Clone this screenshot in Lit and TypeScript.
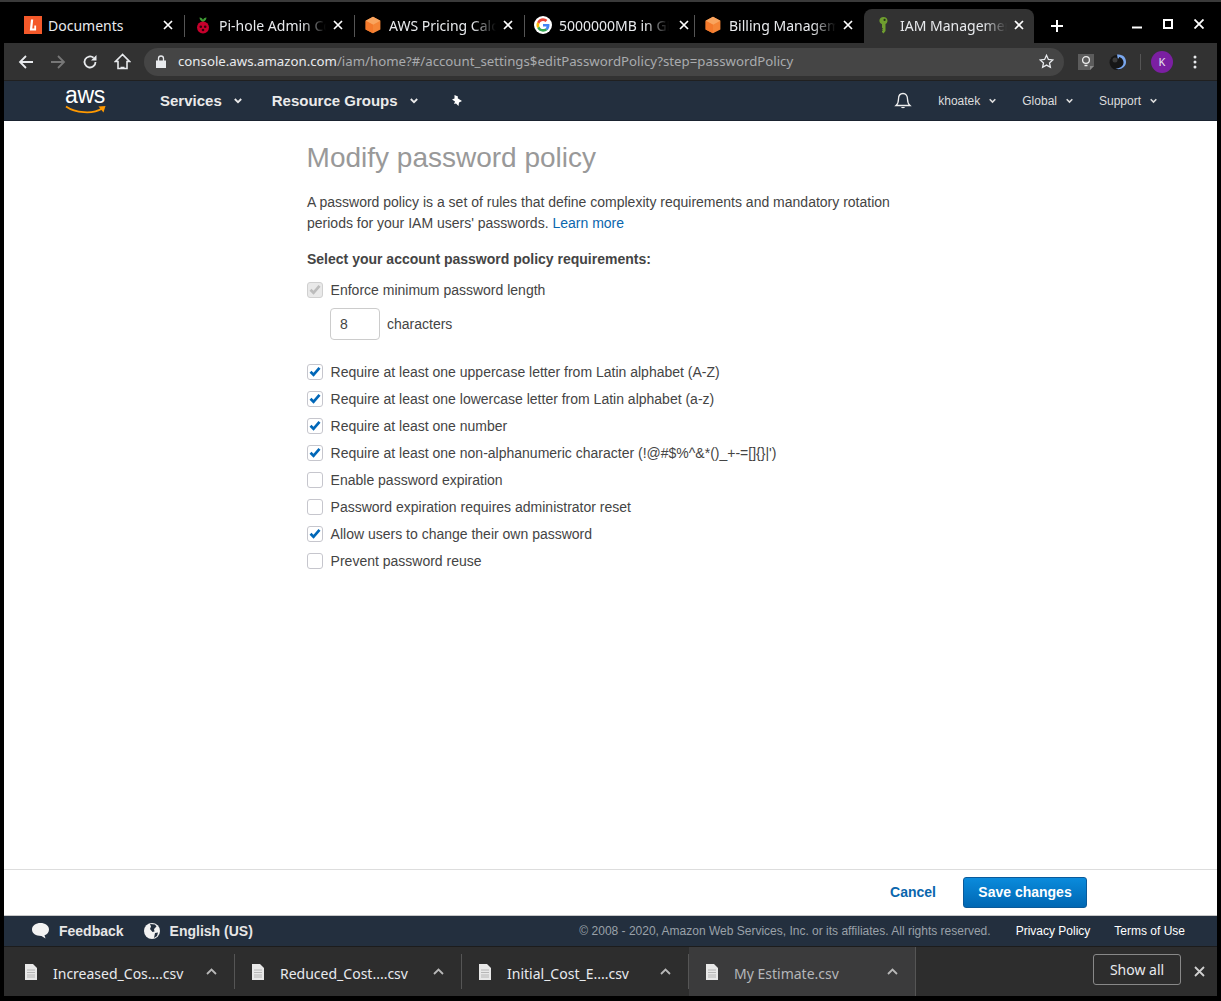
import { LitElement, html, css, svg } from "lit";
import { customElement } from "lit/decorators.js";

const cube = svg`<svg width="18" height="18" viewBox="0 0 18 18"><path d="M9 .8l7.400 4v8.600L9 17.300 1.600 13.400V4.800z" fill="#f58536"/><path d="M9 .8l7.400 4L9 8.800 1.600 4.800z" fill="#f9a45e"/><path d="M9 8.800v8.500L1.600 13.400V4.800z" fill="#f4792b"/></svg>`;
const tabs = [
  { title: "Documents", icon: svg`<svg width="18" height="18" viewBox="0 0 18 18"><rect width="18" height="18" fill="#f4592a"/><path d="M7 3.500h2.200L8.300 12.600h2v-3h1.800v4.800H5.800z" fill="#fff"/></svg>` },
  { title: "Pi-hole Admin Console", icon: svg`<svg width="18" height="18" viewBox="0 0 18 18"><path d="M9 6C7 5 5.600 3.500 5.500 1.500 7.500 1.500 8.500 2.500 9 4c.5-1.500 1.500-2.500 3.500-2.500C12.400 3.500 11 5 9 6z" fill="#3f9c35"/><circle cx="9" cy="11.500" r="6" fill="#c7002c"/><circle cx="6.800" cy="10.800" r="1.300" fill="#33000b"/><circle cx="11.200" cy="10.800" r="1.300" fill="#33000b"/><circle cx="9" cy="14" r="1.300" fill="#33000b"/></svg>` },
  { title: "AWS Pricing Calculator", icon: cube },
  { title: "5000000MB in GB", icon: svg`<svg width="18" height="18" viewBox="0 0 18 18"><circle cx="9" cy="9" r="9" fill="#fff"/><path d="M15.500 9.300c0-.5 0-1-.1-1.400H9v2.600h3.600c-.2.900-.7 1.600-1.400 2.100l2.200 1.700c1.300-1.200 2.100-3 2.100-5z" fill="#4285f4"/><path d="M9 15.700c1.800 0 3.300-.6 4.400-1.600l-2.200-1.700c-.6.400-1.300.7-2.200.7-1.700 0-3.100-1.100-3.600-2.700l-2.200 1.700c1.100 2.200 3.300 3.600 5.800 3.600z" fill="#34a853"/><path d="M5.400 10.400c-.3-.9-.3-1.800 0-2.700L3.200 6c-1 1.900-1 4.100 0 6.100z" fill="#fbbc05"/><path d="M9 5c1 0 1.800.3 2.500 1l1.900-1.900C12.200 3 10.700 2.300 9 2.300 6.500 2.300 4.300 3.700 3.200 6l2.200 1.700C5.900 6.100 7.300 5 9 5z" fill="#ea4335"/></svg>` },
  { title: "Billing Management Console", icon: cube },
];
const chev = svg`<svg class="chev" width="8" height="6" viewBox="0 0 8 6"><path d="M.8 1l3.200 3.200L7.200 1" fill="none" stroke="currentColor" stroke-width="1.800"/></svg>`;
const x = svg`<svg width="10" height="10" viewBox="0 0 10 10"><path d="M1 1l8 8M9 1l-8 8" stroke="#fff" stroke-width="1.700"/></svg>`;
const doc = svg`<svg width="12" height="16" viewBox="0 0 12 16"><path d="M0 0h8l4 4v12H0z" fill="#e8e8e8"/><path d="M2 6h8M2 8.500h8M2 11h8M2 13h8" stroke="#a8a8a8" stroke-width=".8"/></svg>`;
const tick = svg`<svg width="12" height="11" viewBox="0 0 12 11"><path d="M1.500 5.800l3 3L10.500 1.800" fill="none" stroke="currentColor" stroke-width="2.700"/></svg>`;

const opts: [string, boolean][] = [
  ["Require at least one uppercase letter from Latin alphabet (A-Z)", true],
  ["Require at least one lowercase letter from Latin alphabet (a-z)", true],
  ["Require at least one number", true],
  ["Require at least one non-alphanumeric character (!@#$%^&*()_+-=[]{}|')", true],
  ["Enable password expiration", false],
  ["Password expiration requires administrator reset", false],
  ["Allow users to change their own password", true],
  ["Prevent password reuse", false],
];
const downloads = [
  { name: "Increased_Cos....csv", w: 231 },
  { name: "Reduced_Cost....csv", w: 227 },
  { name: "Initial_Cost_E....csv", w: 227 },
  { name: "My Estimate.csv", w: 227, hover: true },
];

@customElement("app-root")
export class AppRoot extends LitElement {
  static styles = css`
    :host { display: flex; flex-direction: column; width: 1221px; height: 1001px; background: #000; box-sizing: border-box; border-top: 2px solid #3a3a3a; font-family: "Liberation Sans", Arial, sans-serif; overflow: hidden; }
    .ui { font-family: "Noto Sans", Roboto, sans-serif; }
    .strip { height: 41px; display: flex; align-items: flex-end; padding-left: 14px; color: #e8eaed; flex: none; }
    .tab { width: 170px; height: 34px; box-sizing: border-box; display: flex; align-items: center; padding: 0 0 2px 10px; font-size: 14px; position: relative; }
    .tab + .tab::before { content: ""; position: absolute; left: 0; top: 6px; height: 22px; width: 1px; background: #555; }
    .tab svg:first-child { flex: none; }
    .title { flex: 1; min-width: 0; margin-left: 7px; white-space: nowrap; overflow: hidden; -webkit-mask-image: linear-gradient(to left, transparent, #000 24px); mask-image: linear-gradient(to left, transparent, #000 24px); }
    .title.full { margin-left: 6px; -webkit-mask-image: none; mask-image: none; }
    .title.short { flex: none; width: 110px; margin-right: 3px; }
    .close { flex: none; width: 10px; height: 10px; display: flex; margin: 0 11px 0 7px; }
    .tab.active { background: #323232; border-radius: 8px 8px 0 0; }
    .tab.active::before { display: none; }
    .tab.active .title { margin-left: 8px; }
    .tab.active .close { margin-right: 10px; }
    .plus { margin-left: 17px; margin-bottom: 11px; display: flex; }
    .winctl { margin-left: auto; display: flex; align-items: center; gap: 21px; margin-bottom: 14px; padding-right: 17px; }
    .toolbar { height: 38px; flex: none; background: #323232; display: flex; align-items: center; margin: 0 4px; padding: 0 0 0 6px; color: #fff; box-sizing: border-box; border-bottom: 1px solid #202020; }
    .nav-ic { display: flex; align-items: center; justify-content: center; flex: none; width: 32px; }
    .omni { width: 920px; height: 28px; margin-left: 6px; background: #454545; border-radius: 14px; display: flex; align-items: center; font-size: 13.240px; color: #a9abae; flex: none; padding-left: 12px; box-sizing: border-box; }
    .omni b { font-weight: 400; color: #e8eaed; }
    .omni .url { padding-bottom: 1px; }
    .omni .lock { margin-right: 12px; display: flex; }
    .omni .star { margin-left: auto; margin-right: 10px; display: flex; }
    .tools { flex: 1; display: flex; align-items: center; padding-left: 14px; }
    .vsep { width: 1px; height: 16px; background: #555; }
    .avatar { width: 22px; height: 22px; border-radius: 50%; background: #7b1fa2; color: #e8eaed; font-size: 11px; display: flex; align-items: center; justify-content: center; }
    .win { flex: 1; min-height: 0; display: flex; flex-direction: column; margin: 0 4px 5px; background: #fff; }
    .awsnav { height: 40px; flex: none; background: #232f3e; color: #eee; display: flex; align-items: center; border-bottom: 1px solid #1a2330; box-sizing: border-box; }
    .logo { margin-left: 61px; width: 42px; flex: none; position: relative; height: 34px; }
    .logo span { position: absolute; left: 0; top: -1px; font-size: 23px; line-height: 24px; color: #fff; letter-spacing: -.3px; }
    .logo svg { position: absolute; left: 0; top: 21px; }
    .mainitem { font-weight: 700; font-size: 15px; display: flex; align-items: center; color: #eaeaea; }
    .mainitem .chev { margin-left: 12px; }
    .small { font-size: 12px; display: flex; align-items: center; color: #ddd; }
    .small .chev { margin-left: 9px; width: 7px; }
    main { flex: 1; min-height: 0; padding: 21px 0 0 303px; color: #444; font-size: 14px; }
    h1 { margin: 0 0 0 -.4px; font-size: 28px; line-height: 32px; font-weight: 400; color: #999; }
    p { margin: 18px 0 0; width: 600px; line-height: 21px; }
    a { color: #0a66ad; text-decoration: none; }
    .lead { margin-top: 16px; font-weight: 700; line-height: 18px; }
    .row { height: 27px; display: flex; align-items: center; gap: 7.600px; }
    .first { margin-top: 8px; }
    .cb { width: 14px; height: 14px; border: 1px solid #c6c6cd; border-radius: 3px; flex: none; background: #fff; display: flex; align-items: center; justify-content: center; color: #0067b8; }
    .cb.dis { background: #e9e9e9; color: #bcbcbc; border-color: #d0d0d0; }
    .len { display: flex; align-items: center; gap: 7px; margin: 5px 0 18px 23px; }
    .input { width: 48px; height: 30px; border: 1px solid #ccc; border-radius: 4px; box-sizing: content-box; padding: 0; display: flex; align-items: center; }
    .input span { margin-left: 9px; }
    .actions { height: 46px; flex: none; border-top: 1px solid #ddd; display: flex; align-items: center; justify-content: flex-end; padding: 0 130px 1px 0; gap: 27px; box-sizing: border-box; font-weight: 700; }
    .actions a { font-size: 14px; }
    .save { width: 124px; height: 31px; border: 1px solid #0a5a9a; border-radius: 3px; box-sizing: border-box; background: linear-gradient(#0a8bdc, #0067b3); color: #fff; display: flex; align-items: center; justify-content: center; font-size: 14px; }
    .foot { height: 31px; flex: none; background: #232f3e; color: #fff; display: flex; align-items: center; font-size: 12px; border-top: 1px solid #c8c8c8; box-sizing: border-box; padding-right: 32px; }
    .foot .fb { font-weight: 700; font-size: 14px; color: #e6e6e6; display: flex; align-items: center; gap: 9px; }
    .copy { margin-left: auto; color: #9aa1a9; }
    .links { margin-left: 25px; }
    .shelf { height: 50px; flex: none; background: #2d2d2d; display: flex; align-items: stretch; color: #e8eaed; border-top: 1px solid #1c1c1c; box-sizing: border-box; }
    .dl { box-sizing: border-box; display: flex; align-items: center; border-right: 1px solid #555; padding-left: 17px; font-size: 14px; margin: 7px 0; }
    .dl:first-child { padding-left: 21px; }
    .dl.hover { margin: 0; background: #3b3b3c; color: #b4b6b9; }
    .dl svg { flex: none; }
    .dl .name { margin-left: 16px; flex: 1; padding-top: 4px; }
    .dl .car { margin-right: 17px; display: flex; }
    .show { margin: 7px 0 0 auto; height: 31px; width: 88px; border: 1px solid #888; border-radius: 3px; box-sizing: border-box; display: flex; align-items: center; justify-content: center; font-size: 14px; }
    .shelfx { margin: 0 12px 0 13px; display: flex; align-items: center; }
  `;

  render() {
    return html`
      <div class="strip ui">
        ${tabs.map((t) => html`<div class="tab">${t.icon}<span class="title ${t.title === "Documents" ? "full" : ""} ${t.title.startsWith("5000") ? "short" : ""}">${t.title}</span><span class="close">${x}</span></div>`)}
        <div class="tab active"><svg width="18" height="18" viewBox="0 0 18 18"><path d="M9.500 1c2.400 0 4 1.600 4 3.800 0 1.500-.8 2.700-2 3.300V15l-2 2.500L8 16v-1l1-.8-1-.8 1-.9-1-.8V8.200C6.300 7.500 5.400 6.300 5.400 4.800 5.400 2.600 7.100 1 9.500 1z" fill="#6f9e2f"/><circle cx="10.600" cy="3.900" r="1.100" fill="#24331a"/></svg>
          <span class="title">IAM Management Console</span><span class="close">${x}</span></div>
        <span class="plus"><svg width="12" height="12" viewBox="0 0 12 12"><path d="M6 0v12M0 6h12" stroke="#fff" stroke-width="2"/></svg></span>
        <div class="winctl">
          <svg width="10" height="10" viewBox="0 0 10 10"><path d="M0 8.500h10" stroke="#fff" stroke-width="2"/></svg>
          <svg width="10" height="10" viewBox="0 0 10 10"><rect x="1" y="1" width="8" height="8" fill="none" stroke="#fff" stroke-width="2"/></svg>
          <svg width="10" height="10" viewBox="0 0 10 10"><path d="M.5.500l9 9M9.500.500l-9 9" stroke="#fff" stroke-width="1.800"/></svg>
        </div>
      </div>

      <div class="toolbar ui">
        <span class="nav-ic"><svg width="16" height="16" viewBox="0 0 16 16"><path d="M15 8H2M8 2L2 8l6 6" fill="none" stroke="#e8eaed" stroke-width="1.800"/></svg></span>
        <span class="nav-ic"><svg width="16" height="16" viewBox="0 0 16 16"><path d="M1 8h13M8 2l6 6-6 6" fill="none" stroke="#777" stroke-width="1.800"/></svg></span>
        <span class="nav-ic"><svg width="16" height="16" viewBox="0 0 16 16"><path d="M13.500 8A5.500 5.500 0 1 1 11.600 3.800" fill="none" stroke="#e8eaed" stroke-width="1.800"/><path d="M14.500 1v5.500H9z" fill="#e8eaed"/></svg></span>
        <span class="nav-ic"><svg width="17" height="17" viewBox="0 0 17 17"><path d="M8.500 1.500L1.500 8.500h2.500v7h9v-7h2.500z M6.500 14.500h4" fill="none" stroke="#e8eaed" stroke-width="1.600"/></svg></span>
        <div class="omni">
          <span class="lock"><svg width="10" height="13" viewBox="0 0 10 13"><path d="M0 5.500h10V13H0z" fill="#e8eaed"/><path d="M2.500 6V3.500a2.500 2.500 0 0 1 5 0V6" fill="none" stroke="#e8eaed" stroke-width="1.300"/></svg></span>
          <span class="url"><b>console.aws.amazon.com</b>/iam/home?#/account_settings$editPasswordPolicy?step=passwordPolicy</span>
          <span class="star"><svg width="15" height="15" viewBox="0 0 15 15"><path d="M7.500 1.300l1.900 4.100 4.400.5-3.300 3 .9 4.400-3.900-2.200-3.900 2.200.9-4.400-3.300-3 4.400-.5z" fill="none" stroke="#e8eaed" stroke-width="1.300"/></svg></span>
        </div>
        <div class="tools">
          <svg width="16" height="16" viewBox="0 0 16 16"><path d="M0 0h16v12l-4 4H0z" fill="#5c5c5c"/><path d="M12 16v-4h4z" fill="#8a8a8a"/><circle cx="8" cy="6" r="3.400" fill="none" stroke="#eee" stroke-width="1.300"/><path d="M6.500 11.500h3" stroke="#eee" stroke-width="1.500"/></svg>
          <svg style="margin-left:15px" width="18" height="18" viewBox="0 0 18 18"><circle cx="8" cy="9.500" r="7.500" fill="#161616"/><circle cx="6" cy="7" r="2.500" fill="#3c3c3c"/><path d="M8 1.500c5.500-.8 9.500 3 9 8-.5 5-6 8-10.500 6 3.500 0 7.500-1.500 8-5.500.3-3-2-5.500-4.500-6 .3 1-.4 1.800-1.300 1.500z" fill="#7aa7ee"/></svg>
          <span class="vsep" style="margin-left:13px"></span>
          <span class="avatar" style="margin-left:10px">K</span>
          <svg style="margin-left:20px" width="4" height="14" viewBox="0 0 4 14"><circle cx="2" cy="2" r="1.500" fill="#e8eaed"/><circle cx="2" cy="7" r="1.500" fill="#e8eaed"/><circle cx="2" cy="12" r="1.500" fill="#e8eaed"/></svg>
        </div>
      </div>

      <div class="win">
        <div class="awsnav">
          <div class="logo"><span>aws</span><svg width="42" height="10" viewBox="0 0 42 10"><path d="M1 1.500C10 8 28 9.500 37 3.500" fill="none" stroke="#f90" stroke-width="1.800"/><path d="M33.500 1.500L40.500 1l-2 6.500z" fill="#f90"/></svg></div>
          <span class="mainitem" style="margin-left:53px">Services ${chev}</span>
          <span class="mainitem" style="margin-left:30px">Resource Groups ${chev}</span>
          <svg style="margin-left:32px" width="14" height="14" viewBox="0 0 14 14"><path d="M4.500 1L8 2.500l-.3 1.700L12 7l-3 1.500-.5 3.500-2.500-2.500-2 .5 1-2.500L2 5.500l2.500-1z M9 12l2.500 2" fill="#fff"/></svg>
          <svg style="margin-left:auto" width="18" height="18" viewBox="0 0 18 18"><path d="M9 1.500c-3 0-4.500 2.500-4.500 5.500 0 3.500-.8 5-2.500 6.500h14c-1.700-1.500-2.500-3-2.500-6.500 0-3-1.500-5.500-4.500-5.500z" fill="none" stroke="#eee" stroke-width="1.300"/><path d="M7 15h4c0 1.500-4 1.500-4 0z" fill="#eee"/></svg>
          <span class="small" style="margin-left:26px">khoatek ${chev}</span>
          <span class="small" style="margin-left:26px">Global ${chev}</span>
          <span class="small" style="margin-left:26px;margin-right:60px">Support ${chev}</span>
        </div>

        <main>
          <h1>Modify password policy</h1>
          <p>A password policy is a set of rules that define complexity requirements and mandatory rotation periods for your IAM users' passwords. <a>Learn more</a></p>
          <div class="lead">Select your account password policy requirements:</div>
          <div class="row first"><span class="cb dis">${tick}</span><span>Enforce minimum password length</span></div>
          <div class="len"><span class="input"><span>8</span></span><span>characters</span></div>
          ${opts.map(([label, on]) => html`<div class="row"><span class="cb">${on ? tick : ""}</span><span>${label}</span></div>`)}
        </main>

        <div class="actions"><a>Cancel</a><span class="save">Save changes</span></div>

        <div class="foot">
          <span class="fb" style="margin-left:27px"><svg width="19" height="18" viewBox="0 0 19 18"><path d="M9.500 1C14 1 18 3.500 18 7.500c0 3-2 5-4.500 5.800l1 3.200-4-2.600C5 14 1 11.500 1 7.500 1 3.500 5 1 9.500 1z" fill="#f2f2f2"/></svg>Feedback</span>
          <span class="fb" style="margin-left:19px"><svg width="18" height="18" viewBox="0 0 18 18"><circle cx="9" cy="9" r="8" fill="#f2f2f2"/><path d="M7 2l5 .5 1.500 2-2.500 2.500.5 2.500-2 .5L7 7l1-2.500zM12 11l3-.5-1 3.500-3 2z" fill="#232f3e"/></svg>English (US)</span>
          <span class="copy">© 2008 - 2020, Amazon Web Services, Inc. or its affiliates. All rights reserved.</span>
          <span class="links">Privacy Policy</span>
          <span style="margin-left:24px">Terms of Use</span>
        </div>

        <div class="shelf ui">
          ${downloads.map((d) => html`<div class="dl ${d.hover ? "hover" : ""}" style="width:${d.w}px">${doc}<span class="name">${d.name}</span><span class="car"><svg width="11" height="7" viewBox="0 0 11 7"><path d="M1 6l4.500-4.500L10 6" fill="none" stroke="#b8b8b8" stroke-width="1.800"/></svg></span></div>`)}
          <span class="show">Show all</span>
          <span class="shelfx"><svg width="11" height="11" viewBox="0 0 11 11"><path d="M1 1l9 9M10 1l-9 9" stroke="#d0d0d0" stroke-width="1.800"/></svg></span>
        </div>
      </div>
    `;
  }
}
